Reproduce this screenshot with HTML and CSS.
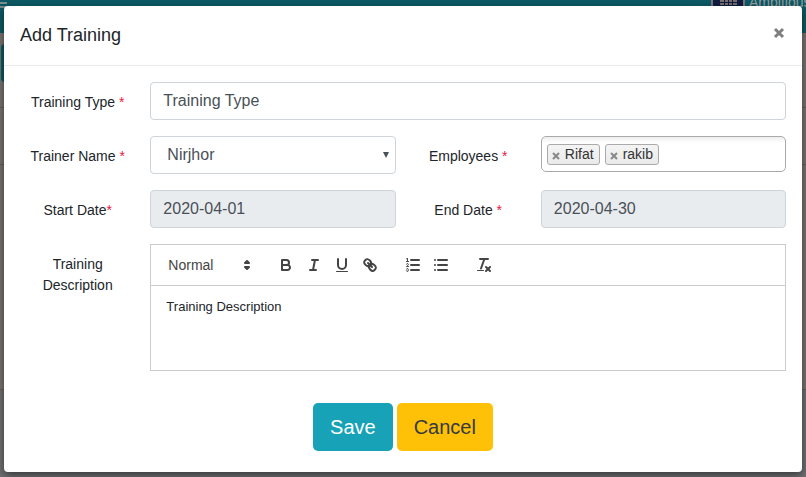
FILE: index.html
```html
<!DOCTYPE html>
<html lang="en">
<head>
<meta charset="utf-8">
<title>Add Training</title>
<meta name="viewport" content="width=device-width, initial-scale=1">
<link rel="stylesheet" href="styles.css">
</head>
<body>
<div class="page" aria-hidden="true">
  <div class="topbar">
    <span class="menu-icon"></span>
    <span class="brand">
      <svg class="brand-logo" viewBox="0 0 34 20"><rect width="34" height="20" fill="#77777f"/><rect x="2" width="30" height="20" fill="#101b3f"/><path d="M9 11h17v9H9z" fill="#77706e"/><path d="M9 14.500h17M9 17.500h17M13.500 11v9M17.500 11v9M21.500 11v9" stroke="#101b3f"/></svg>
      <span>Ambitious</span>
    </span>
  </div>
  <div class="page-action"></div>
  <div class="page-row"></div>
  <div class="page-row page-row-tall"></div>
  <div class="page-row page-end"></div>
</div>

<div class="overlay">
<form class="modal" role="dialog" aria-labelledby="modal-title">
  <header class="modal-header">
    <h1 class="modal-title" id="modal-title">Add Training</h1>
    <button class="close" type="button" aria-label="Close"><svg viewBox="0 0 14 14"><path d="M3 3l8 8M11 3l-8 8"/></svg></button>
  </header>
  <div class="fields">
    <label class="label" for="type">Training Type <span class="req">*</span></label>
    <input class="control wide" id="type" type="text" value="Training Type">

    <label class="label" for="trainer">Trainer Name <span class="req">*</span></label>
    <div class="select-wrap">
      <select class="control select" id="trainer"><option>Nirjhor</option></select>
      <svg class="caret" viewBox="0 0 6 6"><path d="M0 0h6L3 6z"/></svg>
    </div>
    <label class="label" for="employees">Employees <span class="req">*</span></label>
    <div class="tags">
      <span class="tag"><button class="tag-remove" type="button" aria-label="Remove Rifat"><svg viewBox="0 0 8 8"><path d="M1 1l6 6M7 1L1 7"/></svg></button>Rifat</span>
      <span class="tag"><button class="tag-remove" type="button" aria-label="Remove rakib"><svg viewBox="0 0 8 8"><path d="M1 1l6 6M7 1L1 7"/></svg></button>rakib</span>
      <input class="tag-input" id="employees" type="text">
    </div>

    <label class="label" for="start">Start Date<span class="req">*</span></label>
    <input class="control" id="start" type="text" value="2020-04-01" readonly>
    <label class="label" for="end">End Date <span class="req">*</span></label>
    <input class="control" id="end" type="text" value="2020-04-30" readonly>

    <label class="label" for="description">Training Description</label>
    <div class="editor wide">
      <div class="toolbar">
        <button class="picker" type="button">Normal
          <svg class="icon" viewBox="0 0 18 18"><path class="solid" d="M7 11l2 2 2-2zM7 7l2-2 2 2z"/></svg>
        </button>
        <div class="tools">
          <button class="tool" type="button" aria-label="Bold"><svg class="icon" viewBox="0 0 18 18"><path d="M5,4H9.500A2.500,2.500,0,0,1,12,6.500v0A2.500,2.500,0,0,1,9.500,9H5z"/><path d="M5,9h5.500A2.500,2.500,0,0,1,13,11.500v0A2.500,2.500,0,0,1,10.500,14H5z"/></svg></button>
          <button class="tool" type="button" aria-label="Italic"><svg class="icon" viewBox="0 0 18 18"><path d="M7 4h6M5 14h6M8 14L10 4"/></svg></button>
          <button class="tool" type="button" aria-label="Underline"><svg class="icon" viewBox="0 0 18 18"><path d="M5,3V9a4.012,4.012,0,0,0,4,4H9a4.012,4.012,0,0,0,4-4V3"/><rect class="fill" x="3" y="15" width="12" height="1" rx=".5"/></svg></button>
          <button class="tool" type="button" aria-label="Link"><svg class="icon" viewBox="0 0 18 18"><path d="M7 7l4 4"/><path d="M8.900,4.577a3.476,3.476,0,0,1,.36,4.679A3.476,3.476,0,0,1,4.577,8.900C3.185,7.500,2.035,6.400,4.217,4.217S7.500,3.185,8.900,4.577Z"/><path d="M13.423,9.100a3.476,3.476,0,0,0-4.679-.36,3.476,3.476,0,0,0,.36,4.679c1.392,1.392,2.500,2.542,4.679.36S14.815,10.500,13.423,9.100Z"/></svg></button>
        </div>
        <div class="tools">
          <button class="tool" type="button" aria-label="Numbered list"><svg class="icon" viewBox="0 0 18 18"><path d="M7 4h8M7 9h8M7 14h8"/><path class="thin" d="M2.500 5.500h2"/><path class="fill" d="M3.500,6A0.500,0.500,0,0,1,3,5.500V3.085l-0.276.138A0.500,0.500,0,0,1,2.053,3c-0.124-.247-0.023-0.324.224-0.447l1-.5A0.500,0.500,0,0,1,4,2.500v3A0.500,0.500,0,0,1,3.500,6Z"/><path class="thin" d="M4.500,10.500h-2c0-.234,1.850-1.076,1.850-2.234A0.959,0.959,0,0,0,2.500,8.156"/><path class="thin" d="M2.500,14.846a0.959,0.959,0,0,0,1.850-.109A0.700,0.700,0,0,0,3.750,14a0.688,0.688,0,0,0,.6-0.736,0.959,0.959,0,0,0-1.850-.109"/></svg></button>
          <button class="tool" type="button" aria-label="Bulleted list"><svg class="icon" viewBox="0 0 18 18"><path d="M6 4h9M6 9h9M6 14h9M3 4h0M3 9h0M3 14h0"/></svg></button>
        </div>
        <div class="tools">
          <button class="tool" type="button" aria-label="Clear formatting"><svg class="icon" viewBox="0 0 18 18"><path d="M5 3h8M6 12.500L9.350 3M11 11l4 4M15 11l-4 4"/><rect class="fill" x="2" y="14" width="7" height="1" rx=".5"/></svg></button>
        </div>
      </div>
      <textarea class="editor-text" id="description" rows="4">Training Description</textarea>
    </div>
  </div>
  <footer class="actions">
    <button class="btn btn-save" type="submit">Save</button>
    <button class="btn btn-cancel" type="button">Cancel</button>
  </footer>
</form>
</div>
</body>
</html>
```
FILE: styles.css
```css
* { box-sizing: border-box; }

body {
  margin: 0;
  font-family: "Liberation Sans", Arial, sans-serif;
  font-size: 14px;
  line-height: 21px;
  color: #212529;
}

button, input, select, textarea {
  font: inherit;
  color: inherit;
  margin: 0;
}

button {
  padding: 0;
  border: 0;
  background: none;
}

/* Dimmed page behind the dialog */
.page {
  display: flex;
  flex-direction: column;
  min-height: 100vh;
  background: #767370;
}

.topbar {
  display: flex;
  justify-content: space-between;
  height: 33px;
  overflow: hidden;
  background: #0d5964;
}

.menu-icon {
  width: 7px;
  height: 6px;
  margin-top: 2px;
  border: solid #7b8d90;
  border-width: 2px 0;
}

.brand {
  display: flex;
  gap: 4px;
  width: 95px;
  height: 20px;
  font-size: 14px;
  line-height: 4px;
  color: #989fa1;
}

.brand-logo {
  flex: none;
  width: 34px;
  height: 20px;
  margin-top: -12px;
}

.page-action {
  height: 38px;
  width: 60px;
  margin: 11px 1px 25px;
  border-radius: 4px;
  background: #0d5964;
}

.page-row {
  height: 57px;
  border-top: 1px solid #62605d;
}

.page-row-tall { height: 225px; }

.page-end {
  flex: 1;
  background: #6e6f71;
}

/* Dialog */
.overlay {
  position: absolute;
  top: 0;
  left: 0;
  width: 100%;
  padding: 6px 4px 5px;
}

.modal {
  border-radius: 4px;
  background: #fff;
  box-shadow: 0 3px 9px rgba(0, 0, 0, .5);
}

.modal-header {
  display: flex;
  justify-content: space-between;
  align-items: flex-start;
  height: 60px;
  padding: 16px;
  border-bottom: 1px solid #e9ecef;
}

.modal-title {
  margin: 0;
  font-size: 18px;
  font-weight: 400;
  line-height: 27px;
}

.close { padding-top: 4px; }

.close svg {
  display: block;
  width: 14px;
  height: 14px;
  fill: none;
  stroke: #7f7f7f;
  stroke-width: 3;
}

.fields {
  display: grid;
  grid-template-columns: minmax(0, 8fr) minmax(0, 17fr) minmax(0, 8fr) minmax(0, 17fr);
  gap: 16px 15px;
  padding: 16px;
}

.wide { grid-column: span 3; }

.label {
  padding: 10px 16px 0;
  text-align: center;
}

.label:has(.req) { padding: 10px 0 0; }

.req { color: #e8193f; }

.control {
  display: block;
  width: 100%;
  min-width: 0;
  height: 38px;
  padding: 0 12px;
  border: 1px solid #ced4da;
  border-radius: 4px;
  background: #fff;
  font-size: 16px;
  color: #495057;
}

.control[readonly] { background: #e9ecef; }

.select-wrap { position: relative; }

.select {
  appearance: none;
  padding: 0 16px 2px;
}

.caret {
  position: absolute;
  top: 16px;
  right: 7px;
  width: 6px;
  height: 6px;
  fill: #495057;
  pointer-events: none;
}

.tags {
  display: flex;
  align-items: center;
  gap: 5px;
  height: 36px;
  padding: 0 5px;
  border: 1px solid #aaa;
  border-radius: 5px;
  background: linear-gradient(#eee, #fff 6px);
}

.tag {
  display: flex;
  align-items: center;
  gap: 5px;
  height: 21px;
  padding: 0 5px 0 4px;
  border: 1px solid #aaa;
  border-radius: 3px;
  background: linear-gradient(#f4f4f4, #eaeaea);
  color: #333;
}

.tag-remove { padding-top: 3px; }

.tag-remove svg {
  display: block;
  width: 8px;
  height: 8px;
  stroke: #888;
  stroke-width: 2;
}

.tag-input {
  flex: 1;
  min-width: 0;
  padding: 0;
  border: 0;
  outline: 0;
  background: none;
}

/* Rich text editor */
.editor { border: 1px solid #ccc; }

.toolbar {
  display: flex;
  gap: 15px;
  padding: 8px;
  border-bottom: 1px solid #ccc;
  color: #444;
}

.picker {
  display: flex;
  justify-content: space-between;
  align-items: center;
  width: 98px;
  height: 24px;
  padding: 0 1px 0 9px;
}

.tools { display: flex; }

.tool {
  width: 28px;
  height: 24px;
  padding: 3px 5px;
}

.icon {
  display: block;
  width: 18px;
  height: 18px;
  fill: none;
  stroke: #444;
  stroke-width: 2;
  stroke-linecap: round;
  stroke-linejoin: round;
}

.icon .thin { stroke-width: 1; }

.icon .fill {
  fill: #444;
  stroke: none;
}

.icon .solid { fill: #444; }

.editor-text {
  display: block;
  width: 100%;
  height: 84px;
  padding: 12px 15px;
  border: 0;
  outline: 0;
  resize: none;
  font-size: 13px;
  line-height: 18px;
}

.actions {
  display: flex;
  justify-content: center;
  gap: 4px;
  padding: 16px 16px 21px;
}

.btn {
  height: 48px;
  padding: 0 17px;
  border-radius: 5px;
  font-size: 20px;
}

.btn-save {
  background: #17a2b8;
  color: #fff;
}

.btn-cancel {
  background: #ffc107;
  color: #343a40;
}
```
